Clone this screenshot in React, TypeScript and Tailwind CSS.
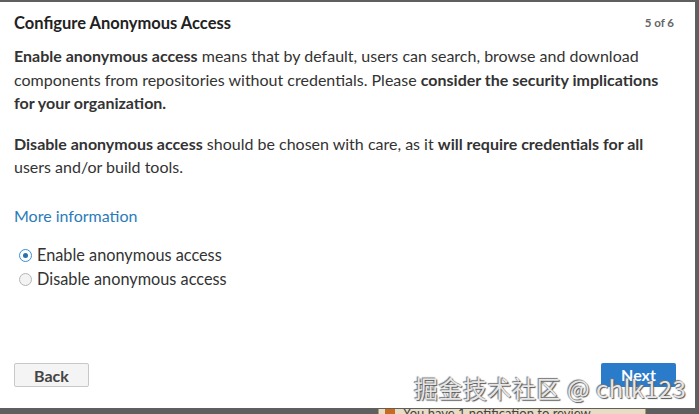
import { useState } from "react";

const Radio = ({ checked, label, onClick }: { checked: boolean; label: string; onClick: () => void }) => (
  <label className="flex items-center gap-[5px] cursor-pointer h-[24px]" onClick={onClick}>
    <span
      className={
        "w-[13px] h-[13px] rounded-full border flex items-center justify-center " +
        (checked ? "border-[#3b8ed4] bg-white" : "border-[#b5b5b5] bg-[#f3f3f3]")
      }
    >
      {checked && <span className="w-[5px] h-[5px] rounded-full bg-[#2d6fae]" />}
    </span>
    <span>{label}</span>
  </label>
);

const App = () => {
  const [access, setAccess] = useState<"enable" | "disable">("enable");

  return (
    <div className="relative w-[699px] h-[414px] overflow-hidden bg-[#5f5f5f] pt-[2px] font-['Lato','Open_Sans',sans-serif] text-[#333333]">
      {/* Dialog */}
      <div className="w-[695px] h-[406px] bg-white flex flex-col px-[14px] pt-[11px] pb-[21px]">
        <div className="flex items-center justify-between h-[20px]">
          <h1 className="text-[16.5px] font-bold text-[#222]">Configure Anonymous Access</h1>
          <span className="text-[11.5px] font-bold text-[#666] mr-[7px]">5 of 6</span>
        </div>

        <div className="mt-[11px] text-[16px] leading-[23.5px]">
          <p>
            <b>Enable anonymous access</b> means that by default, users can search, browse and download
            components from repositories without credentials. Please <b>consider the security implications</b>{" "}
            <b>for your organization.</b>
          </p>
          <p className="mt-[17px]">
            <b>Disable anonymous access</b> should be chosen with care, as it <b>will require credentials for all</b>{" "}
            users and/or build tools.
          </p>
          <a className="block mt-[25px] text-[#2b7bb9]" href="#">
            More information
          </a>
        </div>

        <div className="mt-[16px] ml-[5px] text-[16.3px]">
          <Radio checked={access === "enable"} label="Enable anonymous access" onClick={() => setAccess("enable")} />
          <Radio checked={access === "disable"} label="Disable anonymous access" onClick={() => setAccess("disable")} />
        </div>

        <div className="mt-auto flex items-center justify-between pr-[5px]">
          <button className="w-[75px] h-[24px] rounded-[2px] border border-[#c8c8c8] bg-[#f4f4f4] text-[16px] font-bold text-[#444]">
            Back
          </button>
          <button className="w-[75px] h-[24px] rounded-[2px] bg-[#2a7bc9] text-[16px] font-bold text-white">
            Next
          </button>
        </div>
      </div>

      {/* Notification strip behind the dialog */}
      <div className="ml-[378px] mt-[1px] w-[268px] h-[10px] bg-[#e8dcc4] border-x border-[#b39a6e] flex items-start gap-[8px] px-[6px] overflow-hidden">
        <span className="w-[10px] h-[6px] bg-[#c86a1f]" />
        <span className="text-[13px] leading-[9px] text-[#444]">You have 1 notification to review</span>
      </div>

      {/* Watermark */}
      <div className="absolute left-[414px] top-[370px] text-[24px] text-[#e6e6e6] font-['Noto_Sans_CJK_SC',sans-serif] [text-shadow:1px_1px_1px_#555,-1px_-1px_1px_#777] tracking-[0.5px]">
        掘金技术社区 @ chlk123
      </div>
    </div>
  );
};

export default App;
